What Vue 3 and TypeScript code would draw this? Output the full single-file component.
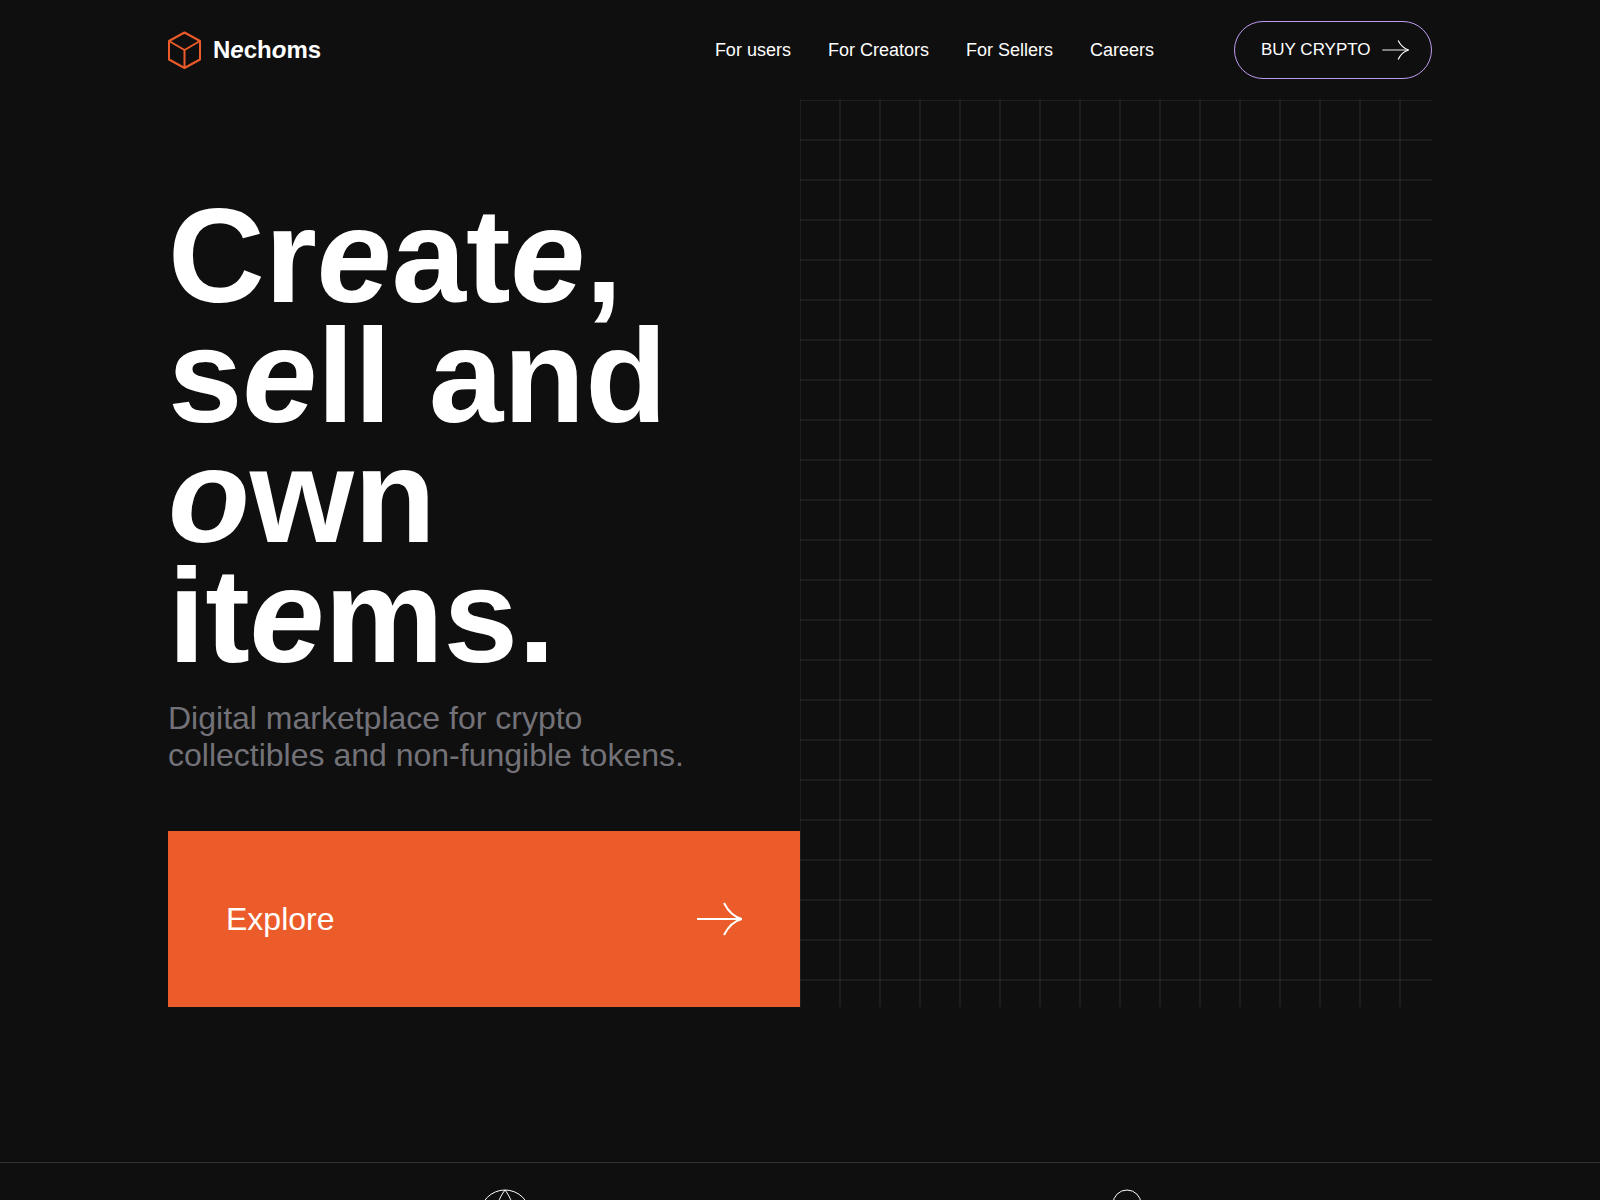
<script setup lang="ts">
interface NavLink {
  label: string
  href: string
}

const links: NavLink[] = [
  { label: 'For users', href: '#users' },
  { label: 'For Creators', href: '#creators' },
  { label: 'For Sellers', href: '#sellers' },
  { label: 'Careers', href: '#careers' },
]
</script>

<template>
  <div class="page">
    <header class="container header">
      <a class="brand" href="#home">
        <svg class="brand-mark" viewBox="0 0 33 38" aria-hidden="true">
          <path d="M16.500 1.500 32 10v18.500l-15.500 8.500L1 28.500V10z" />
          <path d="M1 10l15.500 9L32 10" />
          <path d="M16.500 19v18" />
        </svg>
        <span>N<em>e</em>ch<em>o</em>ms</span>
      </a>
      <nav class="nav" aria-label="Main">
        <a v-for="link in links" :key="link.href" :href="link.href">{{ link.label }}</a>
      </nav>
      <button class="buy" type="button">
        BUY CRYPTO
        <svg class="arrow arrow-small" viewBox="0 0 45 34" aria-hidden="true">
          <path d="M0 17h44" opacity="0.8" />
          <path d="M27 1c4 8 10 14 18 16-8 2-14 8-18 16" />
        </svg>
      </button>
    </header>

    <main>
      <section class="container hero">
        <div class="intro">
          <h1>Cr<em>e</em>at<em>e</em>, s<em>e</em>ll and <em>o</em>wn it<em>e</em>ms.</h1>
          <p>Digital marketplace for crypto collectibles and non-fungible tokens.</p>
          <a class="explore" href="#explore">
            Explore
            <svg class="arrow" viewBox="0 0 45 34" aria-hidden="true">
              <path d="M0 17h44" />
              <path d="M27 1c4 8 10 14 18 16-8 2-14 8-18 16" />
            </svg>
          </a>
        </div>
        <div class="mesh" aria-hidden="true"></div>
      </section>

      <section class="features">
        <div class="container feature-row">
          <svg viewBox="0 0 52 52" aria-hidden="true">
            <circle cx="26" cy="26" r="25" />
            <path d="M26 1C14 17 14 35 26 51M26 1c12 16 12 34 0 50M1 26h50" />
          </svg>
          <svg viewBox="0 0 52 52" aria-hidden="true">
            <circle cx="26" cy="15" r="14" />
            <path d="M4 51c0-13 9-19 22-19s22 6 22 19" />
          </svg>
        </div>
      </section>
    </main>
  </div>
</template>

<style>
body {
  margin: 0;
  background: #0f0f0f;
}
</style>

<style scoped>
.page {
  height: 100vh;
  overflow: hidden;
  background: #0f0f0f;
  color: #fff;
  font-family: "Liberation Sans", Arial, sans-serif;
}

.container {
  box-sizing: border-box;
  width: calc(100% - 48px);
  max-width: 1264px;
  margin: 0 auto;
}

a {
  color: inherit;
  text-decoration: none;
}

svg {
  fill: none;
  flex-shrink: 0;
}

.header {
  display: flex;
  align-items: center;
  height: 100px;
}

.brand {
  display: flex;
  align-items: center;
  gap: 12px;
  margin-right: auto;
  font-size: 24px;
  font-weight: 700;
}

.brand-mark {
  width: 33px;
  height: 38px;
  stroke: #ec5b2a;
  stroke-width: 2;
  stroke-linejoin: round;
}

.nav {
  display: flex;
  gap: 37px;
  margin-right: 80px;
  font-size: 18px;
}

.buy {
  display: flex;
  align-items: center;
  justify-content: space-between;
  box-sizing: border-box;
  width: 198px;
  height: 58px;
  padding: 0 22px 0 26px;
  border: 1px solid #bf9bee;
  border-radius: 29px;
  background: transparent;
  color: inherit;
  font-family: inherit;
  font-size: 17px;
  white-space: nowrap;
}

.arrow {
  width: 45px;
  height: 34px;
  stroke: #fff;
  stroke-width: 2;
}

.arrow-small {
  width: 27px;
  height: 20px;
}

.hero {
  display: grid;
  grid-template-columns: 1fr 1fr;
}

.intro {
  padding-top: 96px;
}

h1 {
  margin: 0 0 24px;
  font-size: 134px;
  line-height: 120px;
  font-weight: 700;
}

.intro p {
  max-width: 540px;
  margin: 0 0 57px;
  color: #737278;
  font-size: 32px;
  line-height: 37px;
}

.explore {
  display: flex;
  align-items: center;
  justify-content: space-between;
  height: 176px;
  padding: 0 58px;
  background: #ec5b2a;
  font-size: 32px;
}

.mesh {
  background-image:
    linear-gradient(to right, rgba(255, 255, 255, 0.06) 2px, transparent 2px),
    linear-gradient(to bottom, rgba(255, 255, 255, 0.06) 2px, transparent 2px);
  background-position: -1px -1px;
  background-size: 40px 40px;
}

.features {
  margin-top: 155px;
  padding-top: 26px;
  border-top: 1px solid #303030;
}

.feature-row {
  display: grid;
  grid-template-columns: 1fr 1fr;
  gap: 12px;
  justify-items: center;
  padding-left: 32px;
}

.feature-row svg {
  width: 52px;
  height: 52px;
  stroke: #fff;
  stroke-width: 1;
}
</style>
